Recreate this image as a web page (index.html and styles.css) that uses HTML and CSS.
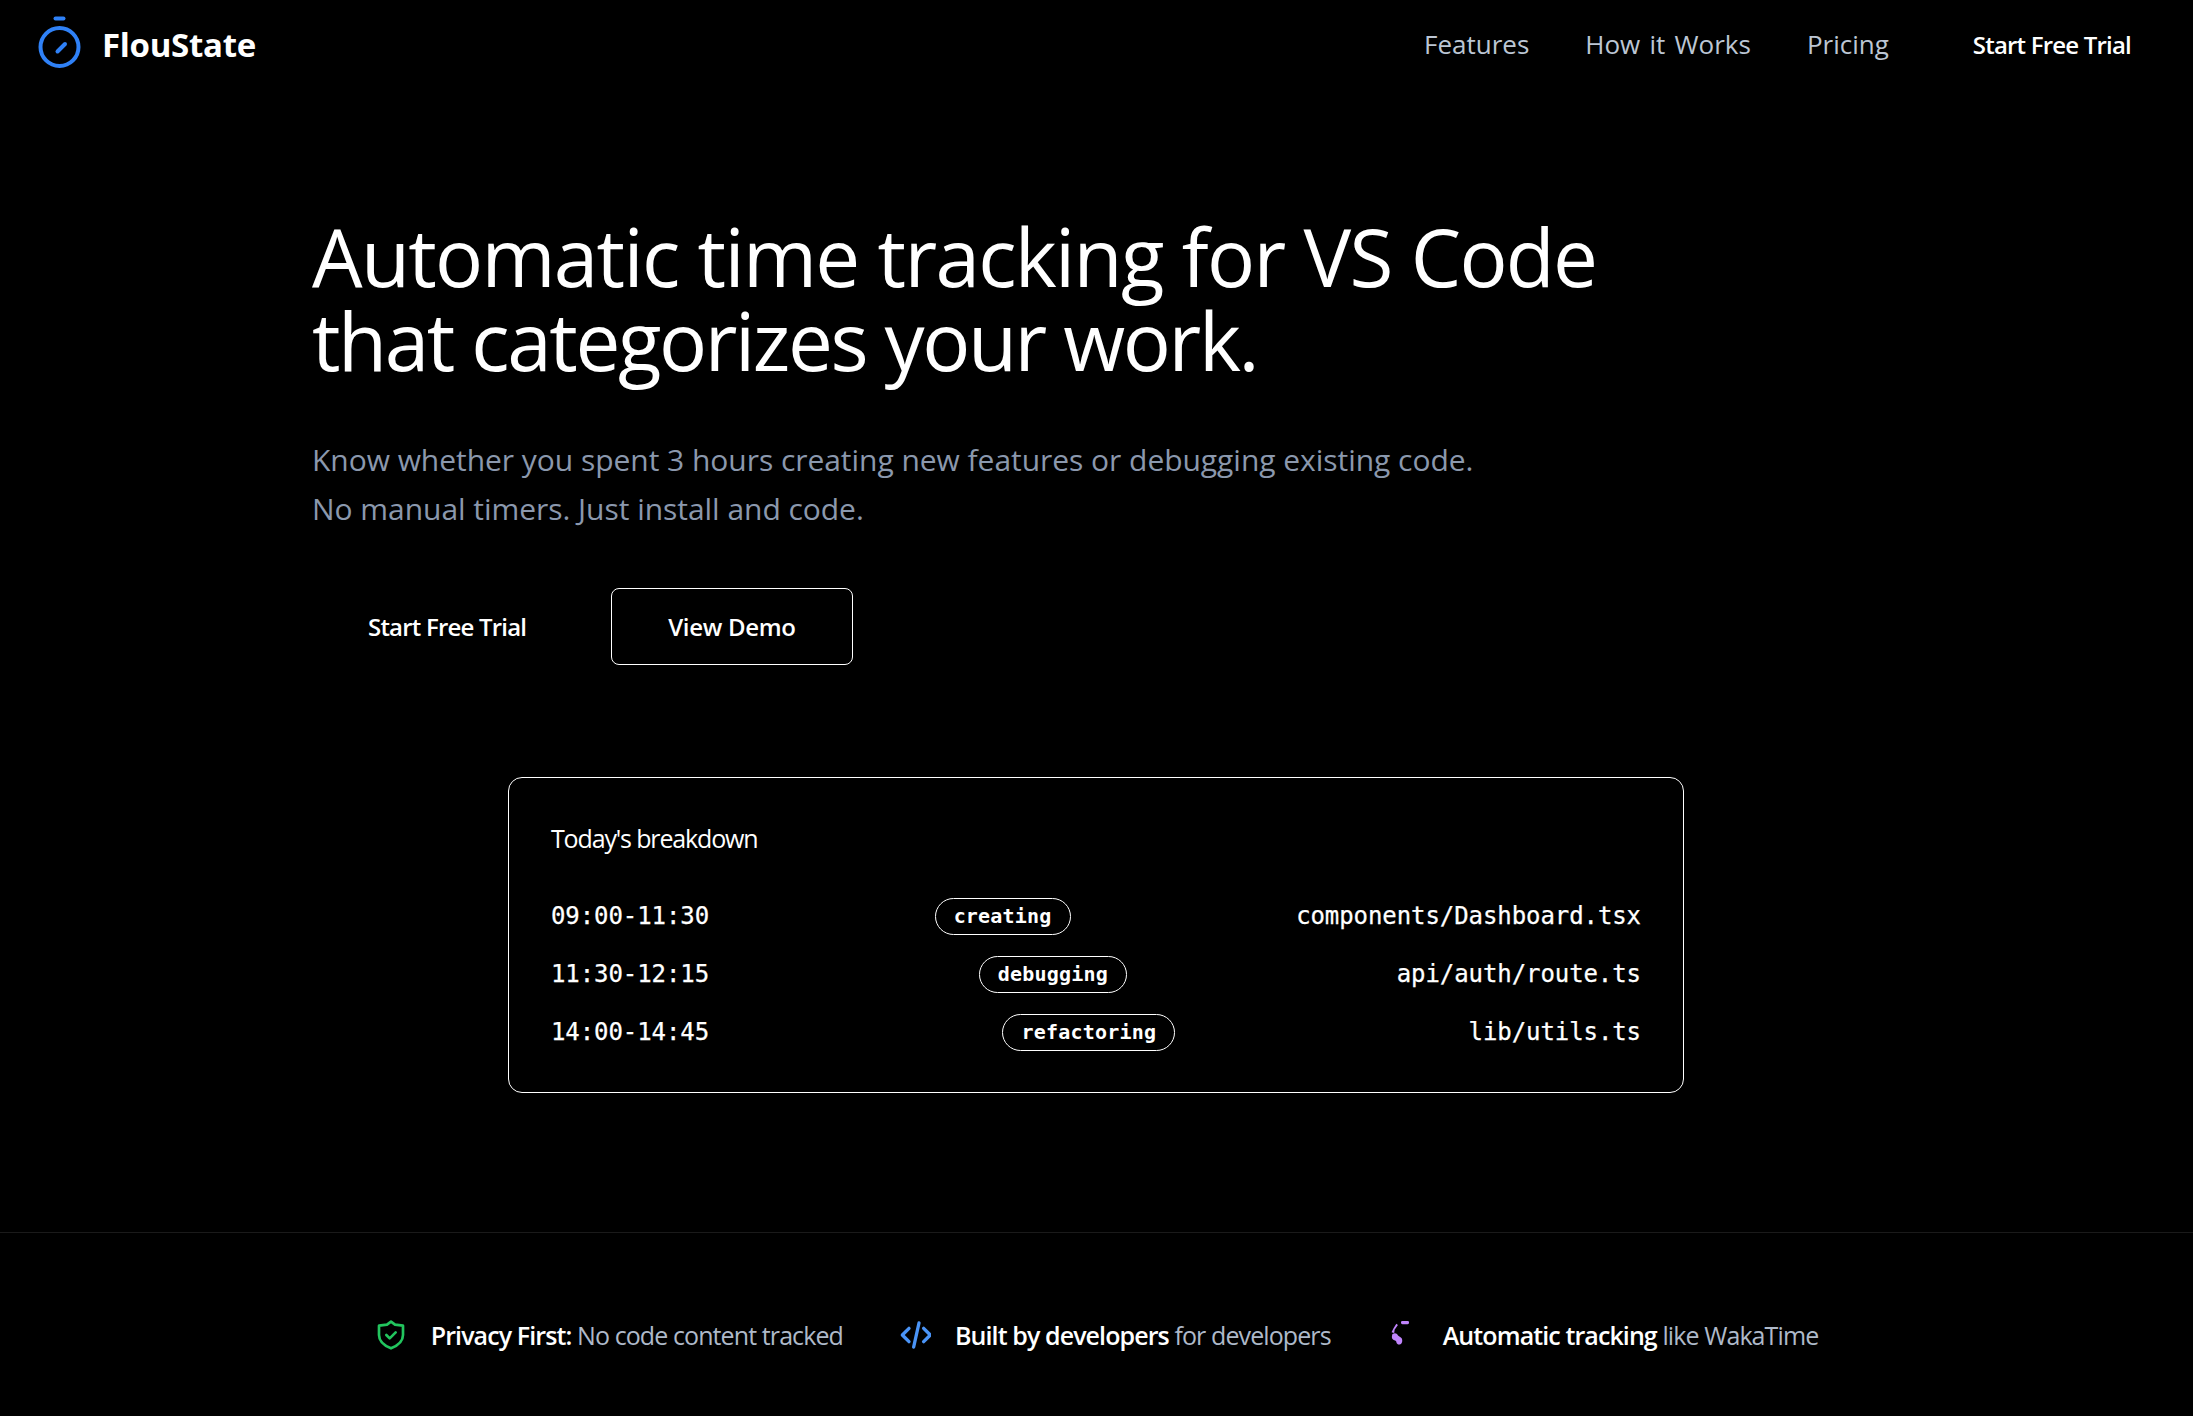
FILE: index.html
```html
<!DOCTYPE html>
<html lang="en">
<head>
<meta charset="utf-8">
<title>FlouState</title>
<link rel="stylesheet" href="styles.css">
</head>
<body>
<header class="nav">
  <a class="brand">
    <svg class="brand-icon" viewBox="0 0 44 52" fill="none" stroke="#2f81f7" stroke-linecap="round">
      <path d="M17.500 2.500h8" stroke-width="4"/>
      <circle cx="21.500" cy="31" r="19" stroke-width="4"/>
      <path d="M19.500 35.500l7.500-7.500" stroke-width="4"/>
    </svg>
    <span>FlouState</span>
  </a>
  <nav class="links">
    <a>Features</a>
    <a>How it Works</a>
    <a>Pricing</a>
    <a class="cta">Start Free Trial</a>
  </nav>
</header>
<main class="hero">
  <h1>Automatic time tracking for VS Code<br><span class="h1-second">that categorizes your work.</span></h1>
  <p class="sub">Know whether you spent 3 hours creating new features or debugging existing code.<br>No manual timers. Just install and code.</p>
  <div class="actions">
    <a class="btn">Start Free Trial</a>
    <a class="btn btn-outline">View Demo</a>
  </div>
  <section class="card">
    <h2>Today's breakdown</h2>
    <div class="row"><span>09:00-11:30</span><span class="tag">creating</span><span>components/Dashboard.tsx</span></div>
    <div class="row"><span>11:30-12:15</span><span class="tag">debugging</span><span>api/auth/route.ts</span></div>
    <div class="row"><span>14:00-14:45</span><span class="tag">refactoring</span><span>lib/utils.ts</span></div>
  </section>
</main>
<footer class="trust">
  <div class="item">
    <svg class="ticon" viewBox="0 0 24 24" fill="none" stroke="#22c55e" stroke-width="2" stroke-linecap="round" stroke-linejoin="round"><path d="M12 2l3 2.200 6 .8v7c0 4.500-4 8-9 10-5-2-9-5.500-9-10V5l6-.8z"/><path d="M8.500 12l2.500 2.500 4.500-4.500"/></svg>
    <span><b>Privacy First:</b> No code content tracked</span>
  </div>
  <div class="item">
    <svg class="ticon" viewBox="0 0 24 24" fill="none" stroke="#4a94f7" stroke-width="2.500" stroke-linecap="round" stroke-linejoin="round"><path d="M7.500 7L2.500 12l5 5"/><path d="M18.500 7l5 5-5 5"/><path d="M15 3l-4 18"/></svg>
    <span><b>Built by developers</b> for developers</span>
  </div>
  <div class="item">
    <svg class="ticon" viewBox="0 0 24 24" fill="#c084fc"><rect x="10.500" y="1.500" width="6" height="2.400" rx="1"/><path d="M7 3.500l1.200 1-2.500 3.500-.3 2.500-2-.5 1.500-3z"/><path d="M4 11.500c1.500-1.500 3.500-1 4 .5.400.8 2 1.200 3 2.500.8 1.500.5 4-1 4.500-1.500.5-3-.5-3-2-.3-1-2.500-.8-3.200-2.500-.3-1 0-2.200.2-3z"/></svg>
    <span><b>Automatic tracking</b> like WakaTime</span>
  </div>
</footer>
</body>
</html>
```
FILE: styles.css
```css
* { box-sizing: border-box; }
html, body { margin: 0; padding: 0; }
body {
  background: #000;
  color: #fff;
  font-family: "Open Sans", "Noto Sans", sans-serif;
  height: 1416px;
  overflow: hidden;
}
.nav {
  display: flex;
  justify-content: space-between;
  align-items: center;
  height: 88px;
  padding: 0 62px 0 38px;
}
.brand { display: flex; align-items: center; gap: 20px; font-size: 33px; font-weight: 700; letter-spacing: -.3px; }
.brand-icon { width: 44px; height: 52px; margin-top: -4px; }
.links { display: flex; align-items: center; gap: 56px; font-size: 26px; color: #bcc6d4; letter-spacing: 0; word-spacing: 2.5px; }
.cta { color: #fff; font-weight: 600; font-size: 24px; margin-left: 28px; letter-spacing: -.8px; word-spacing: 0; }
.hero { padding: 0 312px; height: 1145px; border-bottom: 1px solid #1a1a1a; }
h1 {
  margin: 0;
  padding-top: 126px;
  font-size: 80px;
  line-height: 84px;
  font-weight: 400;
  letter-spacing: -1.7px;
  white-space: nowrap;
}
.h1-second { letter-spacing: -2.4px; }
.sub {
  margin: 53px 0 0;
  font-size: 30px;
  line-height: 49px;
  color: #8b98ad;
  letter-spacing: -.04px;
  white-space: nowrap;
}
.actions { display: flex; gap: 29px; margin-top: 55px; }
.btn {
  display: flex;
  align-items: center;
  justify-content: center;
  height: 77px;
  padding: 0 56px;
  font-size: 24px;
  font-weight: 600;
  letter-spacing: -.8px;
}
.btn-outline { border: 1px solid #fff; border-radius: 8px; letter-spacing: -.3px; }
.card {
  width: 1176px;
  height: 316px;
  margin: 112px 0 0 196px;
  padding: 42px 42px 0;
  border: 1px solid #fff;
  border-radius: 14px;
  font-family: "DejaVu Sans Mono", "Liberation Mono", monospace;
  font-size: 24px;
}
h2 {
  margin: 0 0 31px;
  font-family: "Open Sans", sans-serif;
  font-size: 25px;
  line-height: 36px;
  font-weight: 400;
  letter-spacing: -1.15px;
}
.row {
  display: flex;
  justify-content: space-between;
  align-items: center;
  height: 58px;
  letter-spacing: -.08px;
  -webkit-text-stroke: .25px #fff;
}
.tag {
  display: flex;
  align-items: center;
  height: 37px;
  padding: 0 18px;
  border: 1px solid #fff;
  border-radius: 19px;
  font-size: 20px;
  font-weight: 700;
  letter-spacing: .2px;
  -webkit-text-stroke: 0;
}
.trust {
  display: flex;
  justify-content: center;
  align-items: center;
  gap: 56px;
  height: 184px;
  padding-top: 20px;
  font-size: 25px;
  color: #aeb9c9;
  letter-spacing: -.9px;
}
.item { display: flex; align-items: center; gap: 24px; white-space: nowrap; }
.ticon { width: 32px; height: 32px; flex: none; }
b { color: #fff; font-weight: 600; }
```
